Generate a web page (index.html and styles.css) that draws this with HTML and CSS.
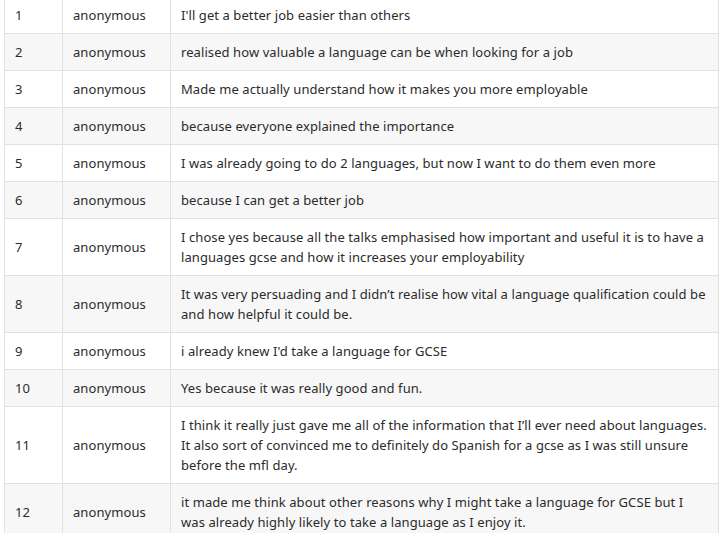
FILE: index.html
```html
<!DOCTYPE html>
<html lang="en">
<head>
<meta charset="utf-8">
<title>Responses</title>
<link rel="stylesheet" href="styles.css">
</head>
<body>
<div class="wrap">
<table class="responses">
  <colgroup>
    <col class="c-num">
    <col class="c-name">
    <col class="c-text">
  </colgroup>
  <tbody>
    <tr><td>1</td><td>anonymous</td><td>I'll get a better job easier than others</td></tr>
    <tr><td>2</td><td>anonymous</td><td>realised how valuable a language can be when looking for a job</td></tr>
    <tr><td>3</td><td>anonymous</td><td>Made me actually understand how it makes you more employable</td></tr>
    <tr><td>4</td><td>anonymous</td><td>because everyone explained the importance</td></tr>
    <tr><td>5</td><td>anonymous</td><td>I was already going to do 2 languages, but now I want to do them even more</td></tr>
    <tr><td>6</td><td>anonymous</td><td>because I can get a better job</td></tr>
    <tr><td>7</td><td>anonymous</td><td>I chose yes because all the talks emphasised how important and useful it is to have a languages gcse and how it increases your employability</td></tr>
    <tr><td>8</td><td>anonymous</td><td>It was very persuading and I didn’t realise how vital a language qualification could be and how helpful it could be.</td></tr>
    <tr><td>9</td><td>anonymous</td><td>i already knew I'd take a language for GCSE</td></tr>
    <tr><td>10</td><td>anonymous</td><td>Yes because it was really good and fun.</td></tr>
    <tr><td>11</td><td>anonymous</td><td>I think it really just gave me all of the information that I’ll ever need about languages. It also sort of convinced me to definitely do Spanish for a gcse as I was still unsure before the mfl day.</td></tr>
    <tr><td>12</td><td>anonymous</td><td>it made me think about other reasons why I might take a language for GCSE but I was already highly likely to take a language as I enjoy it.</td></tr>
  </tbody>
</table>
</div>
</body>
</html>
```
FILE: styles.css
```css
html, body {
  margin: 0;
  padding: 0;
  background: #ffffff;
}
.wrap {
  padding: 0 3px 0 4px;
  margin-top: -4px;
}
.responses {
  width: 715px;
  border-collapse: collapse;
  table-layout: fixed;
  font-family: "Noto Sans", "Open Sans", sans-serif;
  font-size: 13px;
  letter-spacing: 0.08px;
  line-height: 20px;
  color: #2b2b2b;
}
.c-num { width: 58px; }
.c-name { width: 108px; }
.responses td {
  border: 1px solid #e1e1e1;
  padding: 8px 10px;
  vertical-align: middle;
}
.responses tr:nth-child(even) td {
  background: #f7f7f7;
}
```
